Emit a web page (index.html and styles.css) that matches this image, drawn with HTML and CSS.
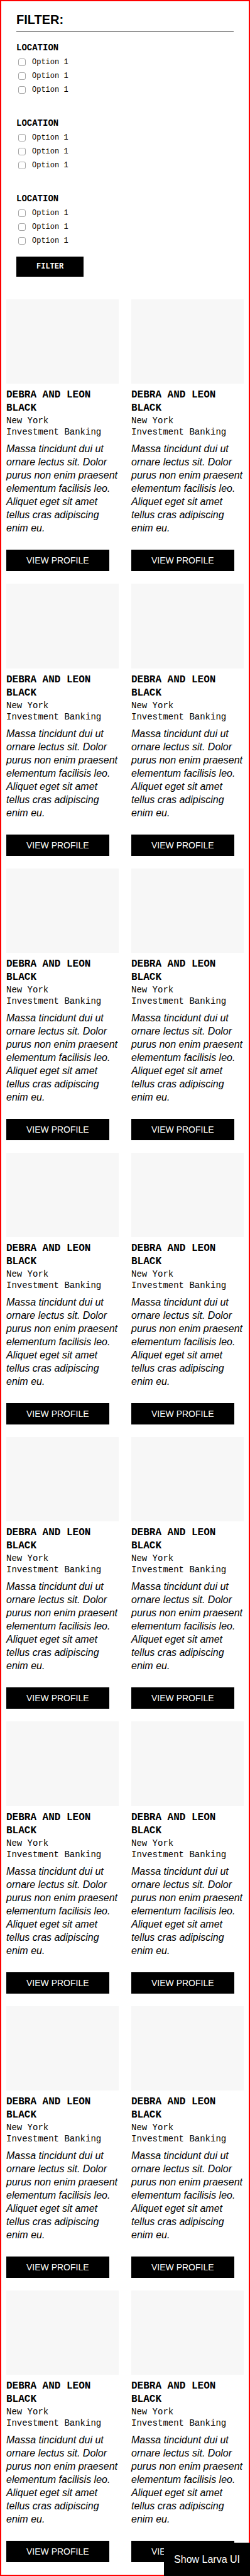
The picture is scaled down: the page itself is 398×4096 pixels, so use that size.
FILE: index.html
```html
<!DOCTYPE html>
<html lang="en">
<head>
<meta charset="utf-8">
<meta name="viewport" content="width=device-width, initial-scale=1">
<title>Profiles</title>
<link rel="stylesheet" href="styles.css">
</head>
<body>
<main class="page">
  <form class="filter">
    <h2 class="filter-title">FILTER:</h2>
    <fieldset class="filter-group">
      <legend class="filter-legend">LOCATION</legend>
      <label class="option"><input type="checkbox" class="option-box">Option 1</label>
      <label class="option"><input type="checkbox" class="option-box">Option 1</label>
      <label class="option"><input type="checkbox" class="option-box">Option 1</label>
    </fieldset>
    <fieldset class="filter-group">
      <legend class="filter-legend">LOCATION</legend>
      <label class="option"><input type="checkbox" class="option-box">Option 1</label>
      <label class="option"><input type="checkbox" class="option-box">Option 1</label>
      <label class="option"><input type="checkbox" class="option-box">Option 1</label>
    </fieldset>
    <fieldset class="filter-group">
      <legend class="filter-legend">LOCATION</legend>
      <label class="option"><input type="checkbox" class="option-box">Option 1</label>
      <label class="option"><input type="checkbox" class="option-box">Option 1</label>
      <label class="option"><input type="checkbox" class="option-box">Option 1</label>
    </fieldset>
    <button type="button" class="filter-submit">FILTER</button>
  </form>
  <section class="profiles" id="profiles"></section>
</main>
<button type="button" class="larva-toggle">Show Larva UI</button>
<template id="card-template">
  <article class="card">
    <div class="card-image"></div>
    <h3 class="card-title">DEBRA AND LEON BLACK</h3>
    <p class="card-meta">New York</p>
    <p class="card-meta">Investment Banking</p>
    <p class="card-text">Massa tincidunt dui ut ornare lectus sit. Dolor purus non enim praesent elementum facilisis leo. Aliquet eget sit amet tellus cras adipiscing enim eu.</p>
    <a class="card-link" href="#profile">VIEW PROFILE</a>
  </article>
</template>
<script src="script.js"></script>
</body>
</html>
```
FILE: styles.css
```css
* {
  box-sizing: border-box;
}

body {
  margin: 0;
  background: #fff;
  color: #000;
  font-family: "Liberation Sans", Arial, sans-serif;
  font-size: 16px;
}

.page {
  min-height: 100vh;
  border: 2px solid #f00;
}

.filter {
  padding: 18px 24px 36px;
}

.filter-title {
  margin: 0 0 18px;
  padding-bottom: 7px;
  border-bottom: 1px solid #000;
  font-size: 20px;
  line-height: 22px;
}

.filter-group {
  display: block;
  min-width: 0;
  margin: 0 0 34px;
  padding: 0;
  border: 0;
}

.filter-group:last-of-type {
  margin-bottom: 14px;
}

.filter-legend {
  padding: 0 0 4px;
  font: bold 14px/16px "Liberation Mono", "Courier New", monospace;
}

.option {
  display: flex;
  align-items: center;
  height: 22px;
  font: 12px/22px "Liberation Mono", "Courier New", monospace;
}

.option-box {
  appearance: none;
  width: 12px;
  height: 12px;
  margin: 0 10px 0 3px;
  border: 1px solid #a6a6a6;
  border-radius: 3px;
  background: #fff;
}

.option-box:checked {
  background: #000;
}

.filter-submit {
  display: block;
  padding: 8px 32px;
  border: 0;
  background: #000;
  color: #fff;
  font: bold 12px/16px "Liberation Mono", "Courier New", monospace;
}

.profiles {
  display: grid;
  grid-template-columns: repeat(2, minmax(0, 1fr));
  gap: 20px;
  padding: 0 8px 20px;
}

.card-image {
  aspect-ratio: 4 / 3;
  margin-bottom: 8px;
  background: #f7f7f7;
}

.card-title {
  margin: 0;
  font: bold 16px/21px "Liberation Mono", "Courier New", monospace;
}

.card-meta {
  margin: 0;
  font: 14px/18px "Liberation Mono", "Courier New", monospace;
}

.card-text {
  margin: 7px 0 24px;
  font-style: italic;
  line-height: 21px;
}

.card-link {
  display: inline-block;
  padding: 8px 32px;
  background: #000;
  color: #fff;
  font-size: 14px;
  line-height: 18px;
  text-decoration: none;
  vertical-align: top;
}

.larva-toggle {
  position: fixed;
  right: 0;
  bottom: 0;
  padding: 16px;
  border: 0;
  background: #000;
  color: #fff;
  font: 16px/21px "Liberation Sans", Arial, sans-serif;
}
```
FILE: script.js
```js
const grid = document.getElementById("profiles");
const template = document.getElementById("card-template");
const CARD_COUNT = 16;

for (let i = 0; i < CARD_COUNT; i += 1) {
  grid.append(template.content.cloneNode(true));
}
```
